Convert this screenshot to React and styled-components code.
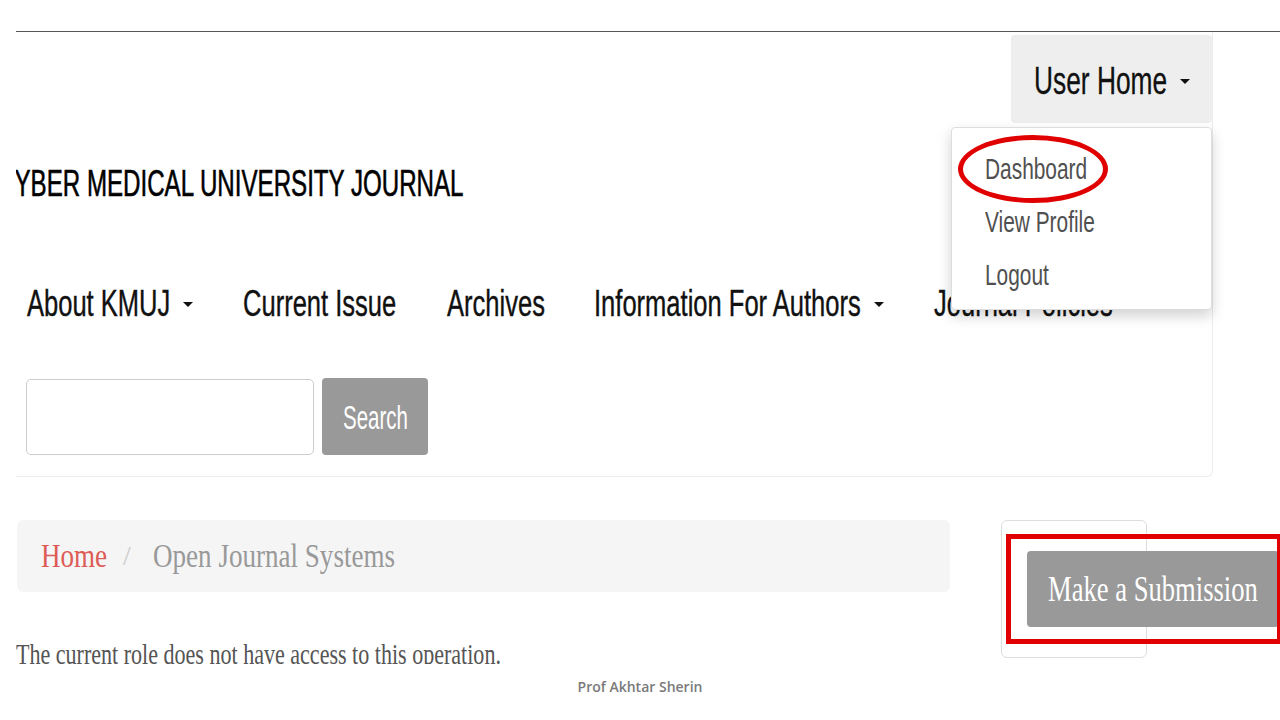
import React, { useLayoutEffect, useRef, useState } from "react";
import styled, { createGlobalStyle } from "styled-components";

const GlobalStyle = createGlobalStyle`
  html, body {
    margin: 0;
    padding: 0;
    background: #ffffff;
  }
  * {
    box-sizing: border-box;
  }
`;

const SANS = `"Liberation Sans", Arial, sans-serif`;
const SERIF = `"Liberation Serif", "Times New Roman", serif`;

// The theme font is a tall condensed face: squeeze a regular face sideways
// and pull the following content in by the width that was taken away.
const SqueezeBox = styled.span`
  display: inline-block;
  white-space: nowrap;
  transform: scaleX(${(p) => p.$s});
  transform-origin: 0 50%;
`;

const Squeeze = ({ s, children }) => {
  const ref = useRef(null);
  const [pull, setPull] = useState(0);
  useLayoutEffect(() => {
    if (ref.current) setPull(-ref.current.offsetWidth * (1 - s));
  }, [s, children]);
  return (
    <SqueezeBox ref={ref} $s={s} style={{ marginRight: pull }}>
      {children}
    </SqueezeBox>
  );
};

// Slide frame
const Slide = styled.div`
  width: 1280px;
  height: 720px;
  overflow: hidden;
  background: #ffffff;
`;

const Viewport = styled.div`
  margin-left: 16px;
  width: 1264px;
  height: 664px;
  overflow: hidden;
`;

const TopRule = styled.div`
  margin-top: 31px;
  border-top: 1px solid #555555;
`;

// Header
const Header = styled.header`
  position: relative;
  width: 1197px;
  padding-bottom: 21px;
  border-right: 1px solid #ececec;
  border-bottom: 1px solid #ececec;
  border-bottom-right-radius: 6px;
`;

const UserRow = styled.div`
  display: flex;
  justify-content: flex-end;
  padding-top: 3px;
`;

const UserButton = styled.button`
  display: flex;
  align-items: center;
  justify-content: center;
  width: 201px;
  height: 88px;
  padding: 4px 0 0 1px;
  border: none;
  border-radius: 4px;
  background: #eeeeee;
  color: #111111;
  font-family: ${SANS};
  font-size: 39px;
  line-height: 44px;
  -webkit-text-stroke: 0.3px #111111;
`;

const Caret = styled.span`
  display: inline-block;
  flex: none;
  width: 0;
  height: 0;
  border-top: 5px solid #111111;
  border-left: 5.5px solid transparent;
  border-right: 5.5px solid transparent;
  margin-left: ${(p) => p.$gap}px;
`;

const Title = styled.div`
  margin-top: 41px;
  margin-left: -35px;
  height: 40px;
  line-height: 40px;
  font-family: ${SANS};
  font-size: 36px;
  color: #000000;
  white-space: nowrap;
  -webkit-text-stroke: 0.6px #000000;
`;

const Nav = styled.nav`
  display: flex;
  align-items: center;
  gap: 50px;
  margin-top: 80px;
  padding-left: 11px;
  height: 40px;
`;

const NavItem = styled.a`
  display: flex;
  align-items: center;
  font-family: ${SANS};
  font-size: 37px;
  line-height: 40px;
  color: #111111;
  text-decoration: none;
  white-space: nowrap;
  -webkit-text-stroke: 0.4px #111111;
`;

const SearchRow = styled.form`
  display: flex;
  align-items: flex-start;
  gap: 8px;
  margin-top: 54px;
  padding-left: 10px;
`;

const SearchInput = styled.input`
  width: 288px;
  height: 76px;
  margin-top: 1px;
  border: 1px solid #cccccc;
  border-radius: 5px;
  background: #ffffff;
`;

const SearchButton = styled.button`
  display: flex;
  align-items: center;
  justify-content: center;
  width: 106px;
  height: 77px;
  padding: 2px 0 0;
  border: none;
  border-radius: 4px;
  background: #999999;
  color: #ffffff;
  font-family: ${SANS};
  font-size: 33px;
`;

// Dropdown
const Menu = styled.ul`
  position: absolute;
  top: 95px;
  right: 0;
  width: 261px;
  height: 183px;
  margin: 0;
  padding: 15px 0 9px;
  list-style: none;
  background: #ffffff;
  border: 1px solid #dddddd;
  border-radius: 4px;
  box-shadow: 0 6px 14px rgba(0, 0, 0, 0.18);
  z-index: 2;
`;

const MenuItem = styled.li`
  height: 53px;
  line-height: 53px;
  padding-left: 33px;
  font-family: ${SANS};
  font-size: 29px;
  color: #505050;
`;

const Circle = styled.div`
  position: absolute;
  left: 6px;
  top: 7px;
  width: 150px;
  height: 68px;
  border: 5px solid #e00000;
  border-radius: 50%;
`;

// Main area
const Main = styled.main`
  display: flex;
  align-items: flex-start;
  gap: 51px;
  margin-top: 43px;
`;

const Content = styled.div`
  width: 934px;
  padding-left: 1px;
`;

const Breadcrumb = styled.ol`
  display: flex;
  align-items: center;
  height: 72px;
  margin: 0;
  padding: 0 0 0 24px;
  list-style: none;
  background: #f5f5f5;
  border-radius: 6px;
  font-family: ${SERIF};
  font-size: 33px;
`;

const Crumb = styled.li`
  color: ${(p) => (p.$link ? "#de5b55" : "#999999")};
`;

const Slash = styled.li`
  color: #cccccc;
  font-size: 28px;
  padding: 0 22px 0 16px;
`;

const Message = styled.p`
  margin: 45px 0 0 -1px;
  font-family: ${SERIF};
  font-size: 30px;
  line-height: 34px;
  color: #555555;
  white-space: nowrap;
`;

const Sidebar = styled.aside`
  position: relative;
  width: 146px;
  height: 138px;
  padding: 30px 0 0 25px;
  border: 1px solid #dddddd;
  border-radius: 6px;
`;

const SubmitButton = styled.a`
  display: flex;
  align-items: center;
  width: 252px;
  height: 76px;
  padding: 2px 0 0 21px;
  border-radius: 4px;
  background: #999999;
  color: #ffffff;
  font-family: ${SERIF};
  font-size: 35px;
  white-space: nowrap;
`;

const Highlight = styled.div`
  position: absolute;
  left: 4px;
  top: 13px;
  width: 276px;
  height: 110px;
  border: 5.5px solid #e00000;
  pointer-events: none;
`;

const Footer = styled.div`
  margin-top: 13px;
  text-align: center;
  line-height: 20px;
  font-family: "Open Sans", "Liberation Sans", sans-serif;
  font-weight: 600;
  font-size: 14px;
  color: #7a7a7a;
`;

const navLinks = [
  { label: "About KMUJ", caret: true },
  { label: "Current Issue" },
  { label: "Archives" },
  { label: "Information For Authors", caret: true },
  { label: "Journal Policies" },
];

const menuItems = ["Dashboard", "View Profile", "Logout"];

export default function App() {
  return (
    <>
      <GlobalStyle />
      <Slide>
        <Viewport>
          <TopRule />
          <Header>
            <UserRow>
              <UserButton>
                <Squeeze s={0.675}>User Home</Squeeze>
                <Caret $gap={13} />
              </UserButton>
            </UserRow>
            <Menu>
              <Circle />
              {menuItems.map((item) => (
                <MenuItem key={item}>
                  <Squeeze s={0.72}>{item}</Squeeze>
                </MenuItem>
              ))}
            </Menu>
            <Title>
              <Squeeze s={0.67}>KHYBER MEDICAL UNIVERSITY JOURNAL</Squeeze>
            </Title>
            <Nav>
              {navLinks.map((item) => (
                <NavItem key={item.label}>
                  <Squeeze s={0.69}>{item.label}</Squeeze>
                  {item.caret && <Caret $gap={13} />}
                </NavItem>
              ))}
            </Nav>
            <SearchRow onSubmit={(e) => e.preventDefault()}>
              <SearchInput type="text" />
              <SearchButton type="submit">
                <Squeeze s={0.62}>Search</Squeeze>
              </SearchButton>
            </SearchRow>
          </Header>
          <Main>
            <Content>
              <Breadcrumb>
                <Crumb $link>
                  <Squeeze s={0.82}>Home</Squeeze>
                </Crumb>
                <Slash>/</Slash>
                <Crumb>
                  <Squeeze s={0.82}>Open Journal Systems</Squeeze>
                </Crumb>
              </Breadcrumb>
              <Message>
                <Squeeze s={0.735}>
                  The current role does not have access to this operation.
                </Squeeze>
              </Message>
            </Content>
            <Sidebar>
              <SubmitButton>
                <Squeeze s={0.76}>Make a Submission</Squeeze>
              </SubmitButton>
              <Highlight />
            </Sidebar>
          </Main>
        </Viewport>
        <Footer>Prof Akhtar Sherin</Footer>
      </Slide>
    </>
  );
}
